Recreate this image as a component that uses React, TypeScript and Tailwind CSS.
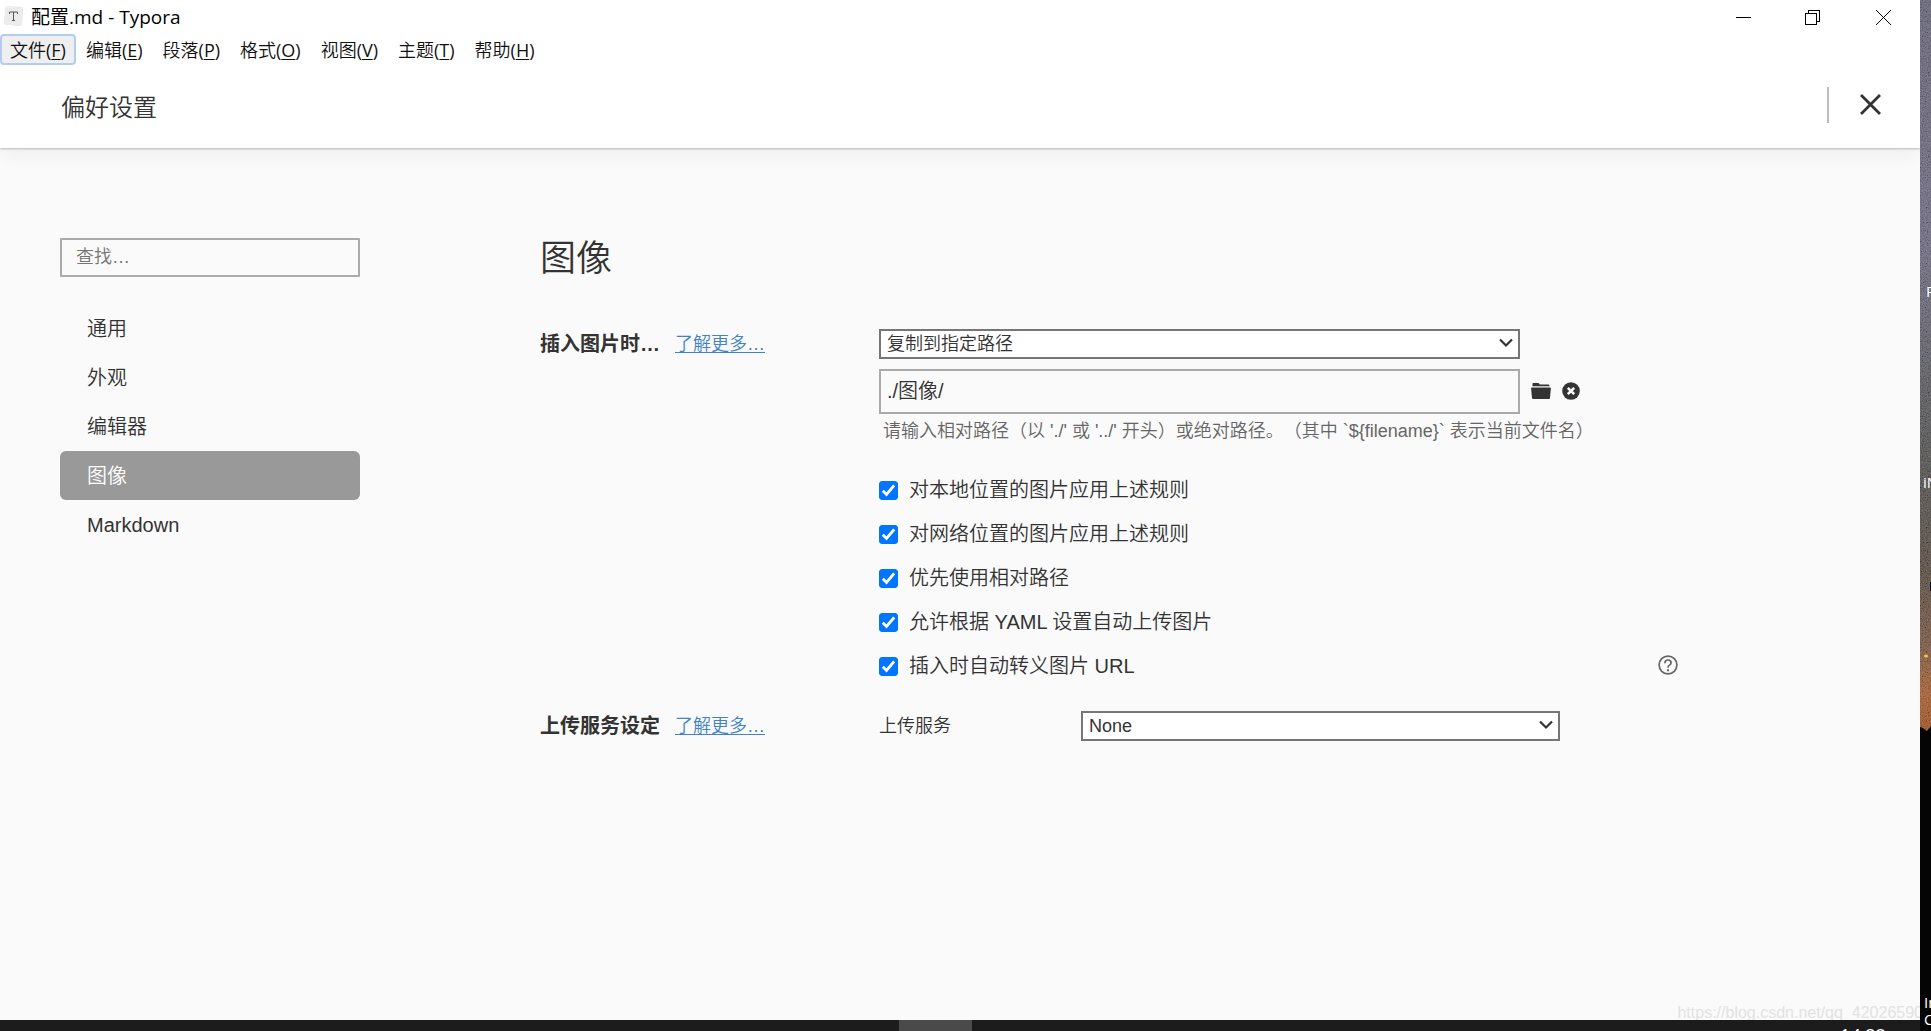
import type { ReactNode } from "react";

const menus: [string, string][] = [
  ["文件", "F"],
  ["编辑", "E"],
  ["段落", "P"],
  ["格式", "O"],
  ["视图", "V"],
  ["主题", "T"],
  ["帮助", "H"],
];

const sections = ["通用", "外观", "编辑器", "图像", "Markdown"];

const rules = [
  "对本地位置的图片应用上述规则",
  "对网络位置的图片应用上述规则",
  "优先使用相对路径",
  "允许根据 YAML 设置自动上传图片",
  "插入时自动转义图片 URL",
];

const pathHint = "请输入相对路径（以 './' 或 '../' 开头）或绝对路径。（其中 `${filename}` 表示当前文件名）";

function TitleBar() {
  return (
    <div className="flex h-[34px] items-center justify-between pl-1 font-['Open_Sans','Noto_Sans_CJK_SC',sans-serif]">
      <div className="flex items-center gap-[7px]">
        <svg width="20" height="22" viewBox="0 0 20 22" aria-hidden="true">
          <rect x="1" y="1" width="17" height="18" rx="2" fill="#f7f7f7" stroke="#e6e6e6" transform="rotate(5 10 11)" />
          <rect x="1" y="2" width="17" height="17" rx="1" fill="#ececec" />
          <path d="M5.500 6h8v2M5.500 8V6M9.500 6v8M8 14.500h3" fill="none" stroke="#555" />
        </svg>
        <span className="text-[19px] leading-6 font-normal text-black">配置.md - Typora</span>
      </div>
      <div className="flex pr-px">
        <button aria-label="最小化" className="flex h-[34px] w-[68px] items-center justify-center">
          <svg width="15" height="15" viewBox="0 0 15 15" shapeRendering="crispEdges"><path d="M0 7.500h15" stroke="#000" /></svg>
        </button>
        <button aria-label="还原" className="flex h-[34px] w-[70px] items-center justify-center">
          <svg width="15" height="15" viewBox="0 0 15 15" fill="none" stroke="#000" shapeRendering="crispEdges">
            <path d="M0.500 3.500h11v11h-11zM3.500 3.500v-3h11v11h-3" />
          </svg>
        </button>
        <button aria-label="关闭" className="flex h-[34px] w-[72px] items-center justify-center">
          <svg width="15" height="15" viewBox="0 0 15 15"><path d="M0 0l15 15M15 0L0 15" stroke="#000" /></svg>
        </button>
      </div>
    </div>
  );
}

function MenuBar() {
  return (
    <nav className="flex h-[31px] font-['Open_Sans','Noto_Sans_CJK_SC',sans-serif]">
      {menus.map(([name, key], i) => (
        <button
          key={key}
          className={
            i === 0
              ? "flex items-center rounded-sm border-2 border-[#b3cdf0] bg-[#efefef] px-2 text-[18px] leading-7 text-[#111]"
              : "flex items-center px-[10px] text-[18px] leading-7 text-[#111]"
          }
        >
          {name}
          <span className="font-normal">
            (<span className="underline underline-offset-2">{key}</span>)
          </span>
        </button>
      ))}
    </nav>
  );
}

function Chevron() {
  return (
    <svg className="pointer-events-none absolute right-[7px] top-[9px]" width="14" height="10" viewBox="0 0 14 10" fill="none">
      <path d="M1 1.500l6 6 6-6" stroke="#333" strokeWidth="2.200" />
    </svg>
  );
}

function Select({ label, value }: { label: string; value: string }) {
  return (
    <div className="relative">
      <select
        aria-label={label}
        className="block h-[30px] w-full appearance-none border-2 border-[#767676] bg-white px-[6px] text-[18px] leading-6 text-[#333]"
      >
        <option>{value}</option>
      </select>
      <Chevron />
    </div>
  );
}

function RowLabel({ children }: { children: ReactNode }) {
  return (
    <div className="flex h-[30px] items-center">
      <h2 className="w-[135px] text-[20px] leading-[30px] font-bold">{children}</h2>
      <a href="#more" className="text-[18px] leading-[30px] text-[#4183c4] underline underline-offset-2">
        了解更多…
      </a>
    </div>
  );
}

function Checkbox({ label }: { label: string }) {
  return (
    <label className="flex h-11 items-center gap-[11px] text-[20px] leading-[30px]">
      <span className="relative flex">
        <input type="checkbox" defaultChecked className="size-[19px] appearance-none rounded-[3px] border border-[#767676] bg-white checked:border-[#0075ff] checked:bg-[#0075ff]" />
        <svg className="pointer-events-none absolute inset-0" width="19" height="19" viewBox="0 0 19 19" fill="none">
          <path d="M3.800 9.800l3.700 3.700 7.700-9.200" stroke="#fff" strokeWidth="2.800" />
        </svg>
      </span>
      {label}
    </label>
  );
}

function ImageSettings() {
  return (
    <main className="min-w-0 flex-1">
      <h1 className="text-[36px] leading-[52px]">图像</h1>
      <div className="mt-11 grid grid-cols-[339px_minmax(0,1fr)]">
        <RowLabel>插入图片时…</RowLabel>
        <div>
          <div className="w-[641px]">
            <Select label="插入图片时" value="复制到指定路径" />
          </div>
          <div className="mt-[10px] flex items-center">
            <input
              aria-label="图片路径"
              defaultValue="./图像/"
              className="h-[45px] w-[641px] border-2 border-[#aaa] bg-transparent px-[6px] pb-1 text-[20px] leading-[30px] text-[#333]"
            />
            <button aria-label="选择文件夹" className="mb-0.5 ml-[11px]">
              <svg className="block" width="20" height="16" viewBox="0 0 20 16" fill="#333">
                <path d="M1.500 3.200V.8q0-.8.800-.8h5q.5 0 .8.500l.7 1.100H17.500q.9 0 .9.900v.7z" />
                <path d="M.8 4.500h18.400q.8 0 .7.800l-.9 9.700q-.1 1-1.100 1H2.100q-1 0-1.100-1L.1 5.300q0-.8.700-.8z" />
              </svg>
            </button>
            <button aria-label="清除路径" className="mb-0.5 ml-[11px]">
              <svg className="block" width="18" height="18" viewBox="0 0 18 18">
                <circle cx="9" cy="9" r="8.800" fill="#333" />
                <path d="M5.800 5.800l6.400 6.400M12.200 5.800l-6.400 6.400" stroke="#fafafa" strokeWidth="2.600" />
              </svg>
            </button>
          </div>
          <p className="mt-[5px] whitespace-nowrap pl-1 text-[18px] leading-6 text-[#666] [text-spacing-trim:space-all]">{pathHint}</p>
          <div className="relative mt-[25px]">
            {rules.map((r) => (
              <Checkbox key={r} label={r} />
            ))}
            <button aria-label="帮助" className="absolute bottom-[13px] left-[779px]">
              <svg className="block" width="20" height="20" viewBox="0 0 20 20" fill="none" stroke="#666">
                <circle cx="10" cy="10" r="8.900" strokeWidth="1.700" />
                <path d="M6.900 8.200q0-3.200 3.100-3.200t3.100 2.700q0 1.400-1.600 2.400T10 12.800" strokeWidth="1.700" />
                <path d="M10 14.200v2" strokeWidth="2" />
              </svg>
            </button>
          </div>
        </div>
      </div>
      <div className="mt-[23px] grid grid-cols-[339px_202px_479px]">
        <RowLabel>上传服务设定</RowLabel>
        <span className="text-[18px] leading-[30px]">上传服务</span>
        <Select label="上传服务" value="None" />
      </div>
    </main>
  );
}

function Desktop() {
  return (
    <div className="relative w-[11px] shrink-0 overflow-hidden bg-black font-['Open_Sans',sans-serif] text-[15px] leading-4 font-normal text-white">
      <svg className="absolute inset-0 h-full w-full" viewBox="0 0 11 1031" preserveAspectRatio="none" aria-hidden="true">
        <defs>
          <linearGradient id="sky" x1="0" y1="0" x2="0" y2="1">
            <stop offset="0" stopColor="#58566c" />
            <stop offset="0.350" stopColor="#625f77" />
            <stop offset="0.520" stopColor="#4d4d54" />
            <stop offset="0.650" stopColor="#42413e" />
            <stop offset="0.780" stopColor="#4b3c31" />
            <stop offset="0.880" stopColor="#6e4830" />
            <stop offset="0.950" stopColor="#a3521d" />
            <stop offset="1" stopColor="#9a4210" />
          </linearGradient>
          <filter id="grain" x="0" y="0" width="100%" height="100%">
            <feTurbulence type="fractalNoise" baseFrequency="0.800" numOctaves="2" seed="4" />
            <feColorMatrix values="1.6 0 0 0 -0.3 1.6 0 0 0 -0.3 1.6 0 0 0 -0.3 0 0 0 0 0.25" />
          </filter>
        </defs>
        <rect width="11" height="731" fill="url(#sky)" />
        <rect width="11" height="731" filter="url(#grain)" />
        <path d="M0 727l3 1 4 3 4-5v305H0z" fill="#050505" />
        <ellipse cx="6" cy="656" rx="2" ry="1.500" fill="#ffc040" />
        <path d="M10 582h1v9h-1z" fill="#060620" />
      </svg>
      <span className="absolute left-[6px] top-[283px]">R</span>
      <span className="absolute left-[3px] top-[474px]">iN</span>
      <span className="absolute left-[4px] top-[994px]">In</span>
      <span className="absolute left-[4px] top-[1011px]">C</span>
    </div>
  );
}

export default function App() {
  return (
    <div className="flex h-screen overflow-hidden bg-black font-['Liberation_Sans','Noto_Sans_CJK_SC',sans-serif] font-[350] text-[#333]">
      <div className="flex min-w-0 flex-1 flex-col">
        <div className="relative flex min-h-0 flex-1 flex-col overflow-hidden bg-[#fafafa]">
          <div className="relative bg-white shadow-[0_1px_2px_rgba(0,0,0,0.25),0_4px_22px_rgba(0,0,0,0.06)]">
            <TitleBar />
            <MenuBar />
            <header className="flex h-[83px] items-center justify-between pl-[61px] pr-[39px]">
              <div className="pt-0.5 text-[24px] leading-8">偏好设置</div>
              <div className="mb-1 flex items-center gap-[31px]">
                <div className="h-9 w-0.5 bg-[#bbb]" />
                <button aria-label="关闭偏好设置">
                  <svg className="block" width="21" height="21" viewBox="0 0 21 21">
                    <path d="M1 1l19 19M20 1L1 20" stroke="#333" strokeWidth="2.800" />
                  </svg>
                </button>
              </div>
            </header>
          </div>
          <div className="flex gap-[180px] pl-[60px] pt-[85px]">
            <aside className="mt-[5px] w-[300px] shrink-0">
              <input
                type="search"
                aria-label="查找"
                placeholder="查找…"
                className="block h-[39px] w-full appearance-none rounded-[1px] border-2 border-[#aaa] bg-transparent px-[14px] pb-px text-[18px] leading-6 placeholder:text-[#757575]"
              />
              <ul className="mt-[27px]">
                {sections.map((s) => (
                  <li key={s}>
                    <button
                      className={
                        s === "图像"
                          ? "block h-[49px] w-full rounded-md bg-[#999] pl-[27px] text-left text-[20px] leading-[30px] text-white"
                          : "block h-[49px] w-full pl-[27px] text-left text-[20px] leading-[30px]"
                      }
                    >
                      {s}
                    </button>
                  </li>
                ))}
              </ul>
            </aside>
            <ImageSettings />
          </div>
          <div className="pointer-events-none absolute -bottom-0.5 -right-[3px] text-[16px] leading-[18px] text-[#e2e2e2]">
            https://blog.csdn.net/qq_42026590
          </div>
        </div>
        <div className="flex h-[11px] shrink-0 overflow-hidden bg-[#1c1c1c]">
          <div className="ml-[899px] w-[73px] bg-[#4a4a4a]" />
          <div className="ml-auto mr-[34px] pt-[3px] font-['Open_Sans',sans-serif] text-[18px] leading-6 font-normal text-white">14:22</div>
        </div>
      </div>
      <Desktop />
    </div>
  );
}
